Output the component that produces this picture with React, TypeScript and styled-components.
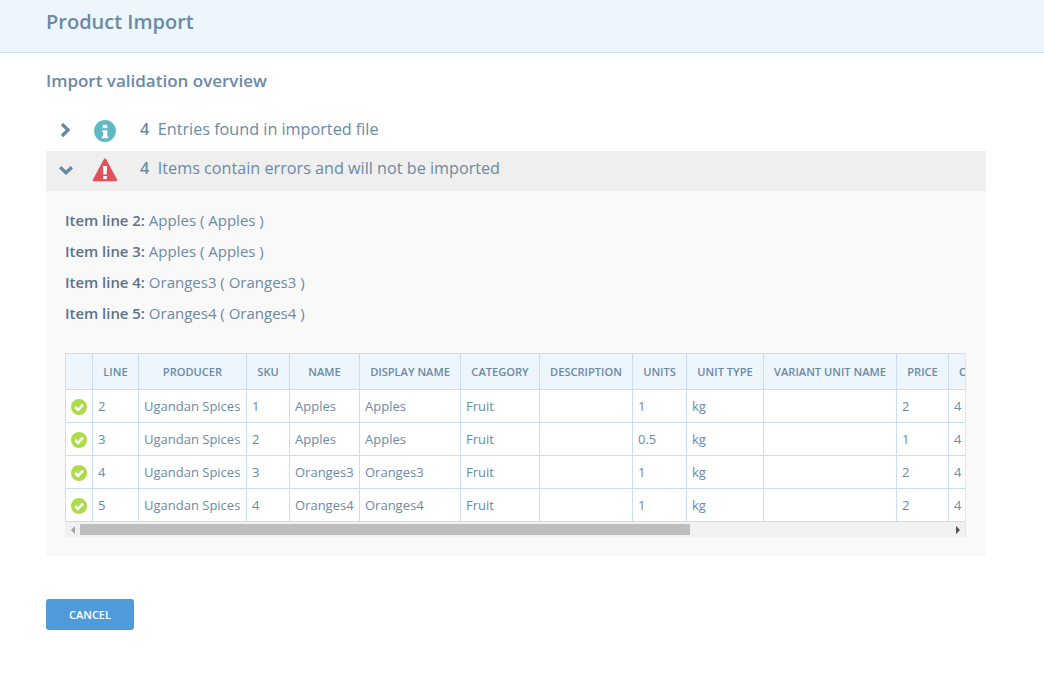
import React from "react";
import styled, { createGlobalStyle } from "styled-components";

const GlobalStyle = createGlobalStyle`
  html, body {
    margin: 0;
    padding: 0;
    background: #fff;
    font-family: "Open Sans", "Liberation Sans", sans-serif;
    color: #6b8aa5;
  }
  * { box-sizing: border-box; }
`;

const columns = [
  { key: "line", label: "LINE", width: 46 },
  { key: "producer", label: "PRODUCER", width: 108 },
  { key: "sku", label: "SKU", width: 43 },
  { key: "name", label: "NAME", width: 70 },
  { key: "display", label: "DISPLAY NAME", width: 101 },
  { key: "category", label: "CATEGORY", width: 79 },
  { key: "description", label: "DESCRIPTION", width: 93 },
  { key: "units", label: "UNITS", width: 54 },
  { key: "unitType", label: "UNIT TYPE", width: 77 },
  { key: "variant", label: "VARIANT UNIT NAME", width: 133 },
  { key: "price", label: "PRICE", width: 52 },
  { key: "on_hand", label: "ON HAND", width: 74 },
];

const rows = [
  { line: "2", producer: "Ugandan Spices", sku: "1", name: "Apples", display: "Apples", category: "Fruit", description: "", units: "1", unitType: "kg", variant: "", price: "2", on_hand: "4" },
  { line: "3", producer: "Ugandan Spices", sku: "2", name: "Apples", display: "Apples", category: "Fruit", description: "", units: "0.5", unitType: "kg", variant: "", price: "1", on_hand: "4" },
  { line: "4", producer: "Ugandan Spices", sku: "3", name: "Oranges3", display: "Oranges3", category: "Fruit", description: "", units: "1", unitType: "kg", variant: "", price: "2", on_hand: "4" },
  { line: "5", producer: "Ugandan Spices", sku: "4", name: "Oranges4", display: "Oranges4", category: "Fruit", description: "", units: "1", unitType: "kg", variant: "", price: "2", on_hand: "4" },
];

const errors = [
  { line: 2, name: "Apples" },
  { line: 3, name: "Apples" },
  { line: 4, name: "Oranges3" },
  { line: 5, name: "Oranges4" },
];

const Chevron = ({ open }: { open?: boolean }) => (
  <svg width="16" height="16" viewBox="0 0 16 16">
    <path
      d={open ? "M2.200 5.300 L8 10.800 L13.800 5.300" : "M4 1 L10 7 L4 13"}
      fill="none"
      stroke="#6488a8"
      strokeWidth="3.300"
    />
  </svg>
);

const InfoIcon = () => (
  <svg width="26" height="24" viewBox="0 0 26 24">
    <circle cx="13" cy="12" r="10.900" fill="#60b8c4" />
    <rect x="10.700" y="5.800" width="4.600" height="3.500" rx="0.600" fill="#fff" />
    <path d="M10 11.200 H15.300 V17.500 H16.300 V19.200 H9.700 V17.500 H11 V13 H10 Z" fill="#fff" />
  </svg>
);

const WarningIcon = () => (
  <svg width="26" height="24" viewBox="0 0 26 24">
    <path
      d="M13 0.500 Q13.800 0.500 14.300 1.400 L25.200 21.800 Q25.800 23.300 24.300 23.300 L1.700 23.300 Q0.200 23.300 0.800 21.800 L11.700 1.400 Q12.200 0.500 13 0.500 Z"
      fill="#e2515a"
    />
    <path d="M10.900 8 H15.100 L14.600 16.500 H11.400 Z" fill="#fff" />
    <rect x="11.200" y="18" width="3.600" height="3.100" fill="#fff" />
  </svg>
);

const CheckIcon = () => (
  <svg width="16" height="16" viewBox="0 0 16 16">
    <circle cx="8" cy="8" r="8" fill="#aedb4a" />
    <path d="M4.200 8 L7 10.800 L12 5.600" fill="none" stroke="#fff" strokeWidth="2.600" />
  </svg>
);

const ArrowLeft = () => (
  <svg width="6" height="8" viewBox="0 0 6 8">
    <path d="M5 0 L1 4 L5 8 Z" fill="#a3a3a3" />
  </svg>
);

const ArrowRight = () => (
  <svg width="6" height="8" viewBox="0 0 6 8">
    <path d="M1 0 L5 4 L1 8 Z" fill="#505050" />
  </svg>
);

export default function App() {
  return (
    <>
      <GlobalStyle />
      <Header>
        <PageTitle>Product Import</PageTitle>
      </Header>
      <Main>
        <Overview>Import validation overview</Overview>
        <SummaryRow>
          <ChevronSlot><Chevron /></ChevronSlot>
          <IconSlot><InfoIcon /></IconSlot>
          <Count>4</Count>
          <SummaryText>Entries found in imported file</SummaryText>
        </SummaryRow>
        <SummaryRow $open>
          <ChevronSlot><Chevron open /></ChevronSlot>
          <IconSlot><WarningIcon /></IconSlot>
          <Count>4</Count>
          <SummaryText>Items contain errors and will not be imported</SummaryText>
        </SummaryRow>
        <Details>
          <ErrorList>
            {errors.map((e) => (
              <ErrorItem key={e.line}>
                <strong>Item line {e.line}:</strong> {e.name} ( {e.name} )
              </ErrorItem>
            ))}
          </ErrorList>
          <TableFrame>
            <TableClip>
              <Table>
                <colgroup>
                  <col style={{ width: 27 }} />
                  {columns.map((c) => (
                    <col key={c.key} style={{ width: c.width }} />
                  ))}
                </colgroup>
                <thead>
                  <tr>
                    <HeadCell />
                    {columns.map((c) => (
                      <HeadCell key={c.key}>{c.label}</HeadCell>
                    ))}
                  </tr>
                </thead>
                <tbody>
                  {rows.map((r) => (
                    <tr key={r.line}>
                      <StatusCell><CheckIcon /></StatusCell>
                      {columns.map((c) => (
                        <BodyCell key={c.key}>{r[c.key as keyof typeof r]}</BodyCell>
                      ))}
                    </tr>
                  ))}
                </tbody>
              </Table>
            </TableClip>
            <ScrollBar>
              <ScrollButton><ArrowLeft /></ScrollButton>
              <ScrollTrack><ScrollThumb /></ScrollTrack>
              <ScrollButton><ArrowRight /></ScrollButton>
            </ScrollBar>
          </TableFrame>
        </Details>
        <Actions>
          <CancelButton>CANCEL</CancelButton>
        </Actions>
      </Main>
    </>
  );
}

const Header = styled.header`
  height: 53px;
  background: #edf5fd;
  border-bottom: 1px solid #cfe2f2;
  padding: 8px 46px 0;
`;

const PageTitle = styled.h1`
  margin: 0;
  font-size: 20px;
  line-height: 27px;
  font-weight: 600;
  color: #6b8aa5;
`;

const Main = styled.main`
  padding: 17px 58px 0 46px;
`;

const Overview = styled.h2`
  margin: 0 0 19px;
  font-size: 17px;
  line-height: 22px;
  font-weight: 600;
  color: #6b8aa5;
`;

const SummaryRow = styled.div<{ $open?: boolean }>`
  height: 40px;
  padding-bottom: ${(p) => (p.$open ? "6px" : "4px")};
  display: flex;
  align-items: center;
  background: ${(p) => (p.$open ? "#efefef" : "transparent")};
`;

const ChevronSlot = styled.span`
  width: 40px;
  margin-top: 3px;
  padding-left: 12px;
  display: flex;
`;

const IconSlot = styled.span`
  width: 54px;
  margin-top: 3px;
  padding-left: 6px;
  display: flex;
`;

const Count = styled.span`
  font-size: 16.200px;
  font-weight: 600;
  color: #6b8aa5;
  margin-right: 8.500px;
`;

const SummaryText = styled.span`
  font-size: 16.200px;
  color: #6b8aa5;
`;

const Details = styled.section`
  height: 365px;
  background: #f9f9f9;
  padding: 14px 20px 0 19px;
`;

const ErrorList = styled.div`
  margin-bottom: 24px;
`;

const ErrorItem = styled.p`
  margin: 0;
  font-size: 15px;
  line-height: 31px;
  color: #6b8aa5;
  strong { font-size: 14.900px; font-weight: 600; color: #5c7289; }
`;

const TableFrame = styled.div`
  width: 901px;
  background: #fff;
  border-right: 1px solid #d8e8ec;
`;

const TableClip = styled.div`
  overflow: hidden;
`;

const Table = styled.table`
  border-collapse: collapse;
  table-layout: fixed;
  width: 957px;
`;

const HeadCell = styled.th`
  height: 36px;
  padding: 0;
  background: #edf5fd;
  border: 1px solid #c9def2;
  font-size: 11.100px;
  font-weight: 600;
  color: #6b8aa5;
  text-align: center;
  white-space: nowrap;
  overflow: hidden;
`;

const StatusCell = styled.td`
  height: 33px;
  padding: 1px 0 0 5px;
  border: 1px solid #c9def2;
  line-height: 0;
`;

const BodyCell = styled.td`
  height: 33px;
  padding: 0 5px;
  border: 1px solid #c9def2;
  font-size: 13px;
  white-space: nowrap;
  overflow: hidden;
  color: #6b8aa5;
`;

const ScrollBar = styled.div`
  height: 15px;
  display: flex;
  background: #f1f1f1;
`;

const ScrollButton = styled.span`
  width: 15px;
  display: flex;
  align-items: center;
  justify-content: center;
`;

const ScrollTrack = styled.div`
  flex: 1;
  padding: 2px 0;
`;

const ScrollThumb = styled.div`
  width: 610px;
  height: 11px;
  background: #bebebe;
`;

const Actions = styled.div`
  padding-top: 43px;
`;

const CancelButton = styled.button`
  width: 88px;
  height: 31px;
  border: none;
  border-radius: 3px;
  background: #4f9ad8;
  color: #fff;
  font-family: inherit;
  font-size: 11px;
  font-weight: 600;
`;
